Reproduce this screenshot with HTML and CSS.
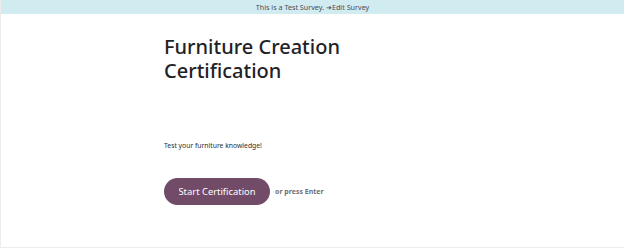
FILE: index.html
```html
<!DOCTYPE html>
<html lang="en">
<head>
  <meta charset="UTF-8">
  <meta name="viewport" content="width=device-width, initial-scale=1.0">
  <title>Furniture Creation Certification</title>
  <link rel="stylesheet" href="styles.css">
</head>
<body>

  <div class="page">
    <!-- Test mode banner -->
    <div class="test-banner">
      This is a Test Survey. <a href="#" class="edit-link">&#10140;Edit Survey</a>
    </div>

    <div class="survey-container">
      <h1 class="survey-title">Furniture Creation Certification</h1>

      <p class="survey-desc">Test your furniture knowledge!</p>

      <div class="start-row">
        <button class="btn-start" type="button">Start Certification</button>
        <span class="press-hint">or press Enter</span>
      </div>
    </div>
  </div>

</body>
</html>
```

FILE: styles.css
```css
body {
  margin: 0;
  font-family: "Noto Sans", "Open Sans", sans-serif;
  background-color: #fff;
  color: #212529;
}
.page {
  height: 248px;
  border-left: 1px solid #ececec;
  border-bottom: 1px solid #ececec;
  box-sizing: border-box;
}
.test-banner {
  background-color: #d1ecf1;
  color: #4f4a5a;
  font-size: 7.2px;
  height: 14px;
  line-height: 14px;
  text-align: center;
}
.edit-link {
  color: #4f4a5a;
  text-decoration: none;
}
.survey-container {
  padding-left: 163px;
  padding-top: 21px;
}
.survey-title {
  font-size: 20px;
  font-weight: 500;
  line-height: 24px;
  margin: 0;
  width: 200px;
  color: #1f2226;
}
.survey-desc {
  font-size: 6.8px;
  margin: 58px 0 0 0;
  color: #2a2d31;
}
.start-row {
  display: flex;
  align-items: center;
  margin-top: 28px;
}
.btn-start {
  background-color: #714b67;
  color: #fff;
  border: none;
  border-radius: 14px;
  height: 27px;
  width: 106px;
  font-family: inherit;
  font-size: 9.4px;
  cursor: pointer;
}
.press-hint {
  font-size: 7px;
  font-weight: bold;
  color: #6c6f74;
  margin-left: 5px;
}
```
